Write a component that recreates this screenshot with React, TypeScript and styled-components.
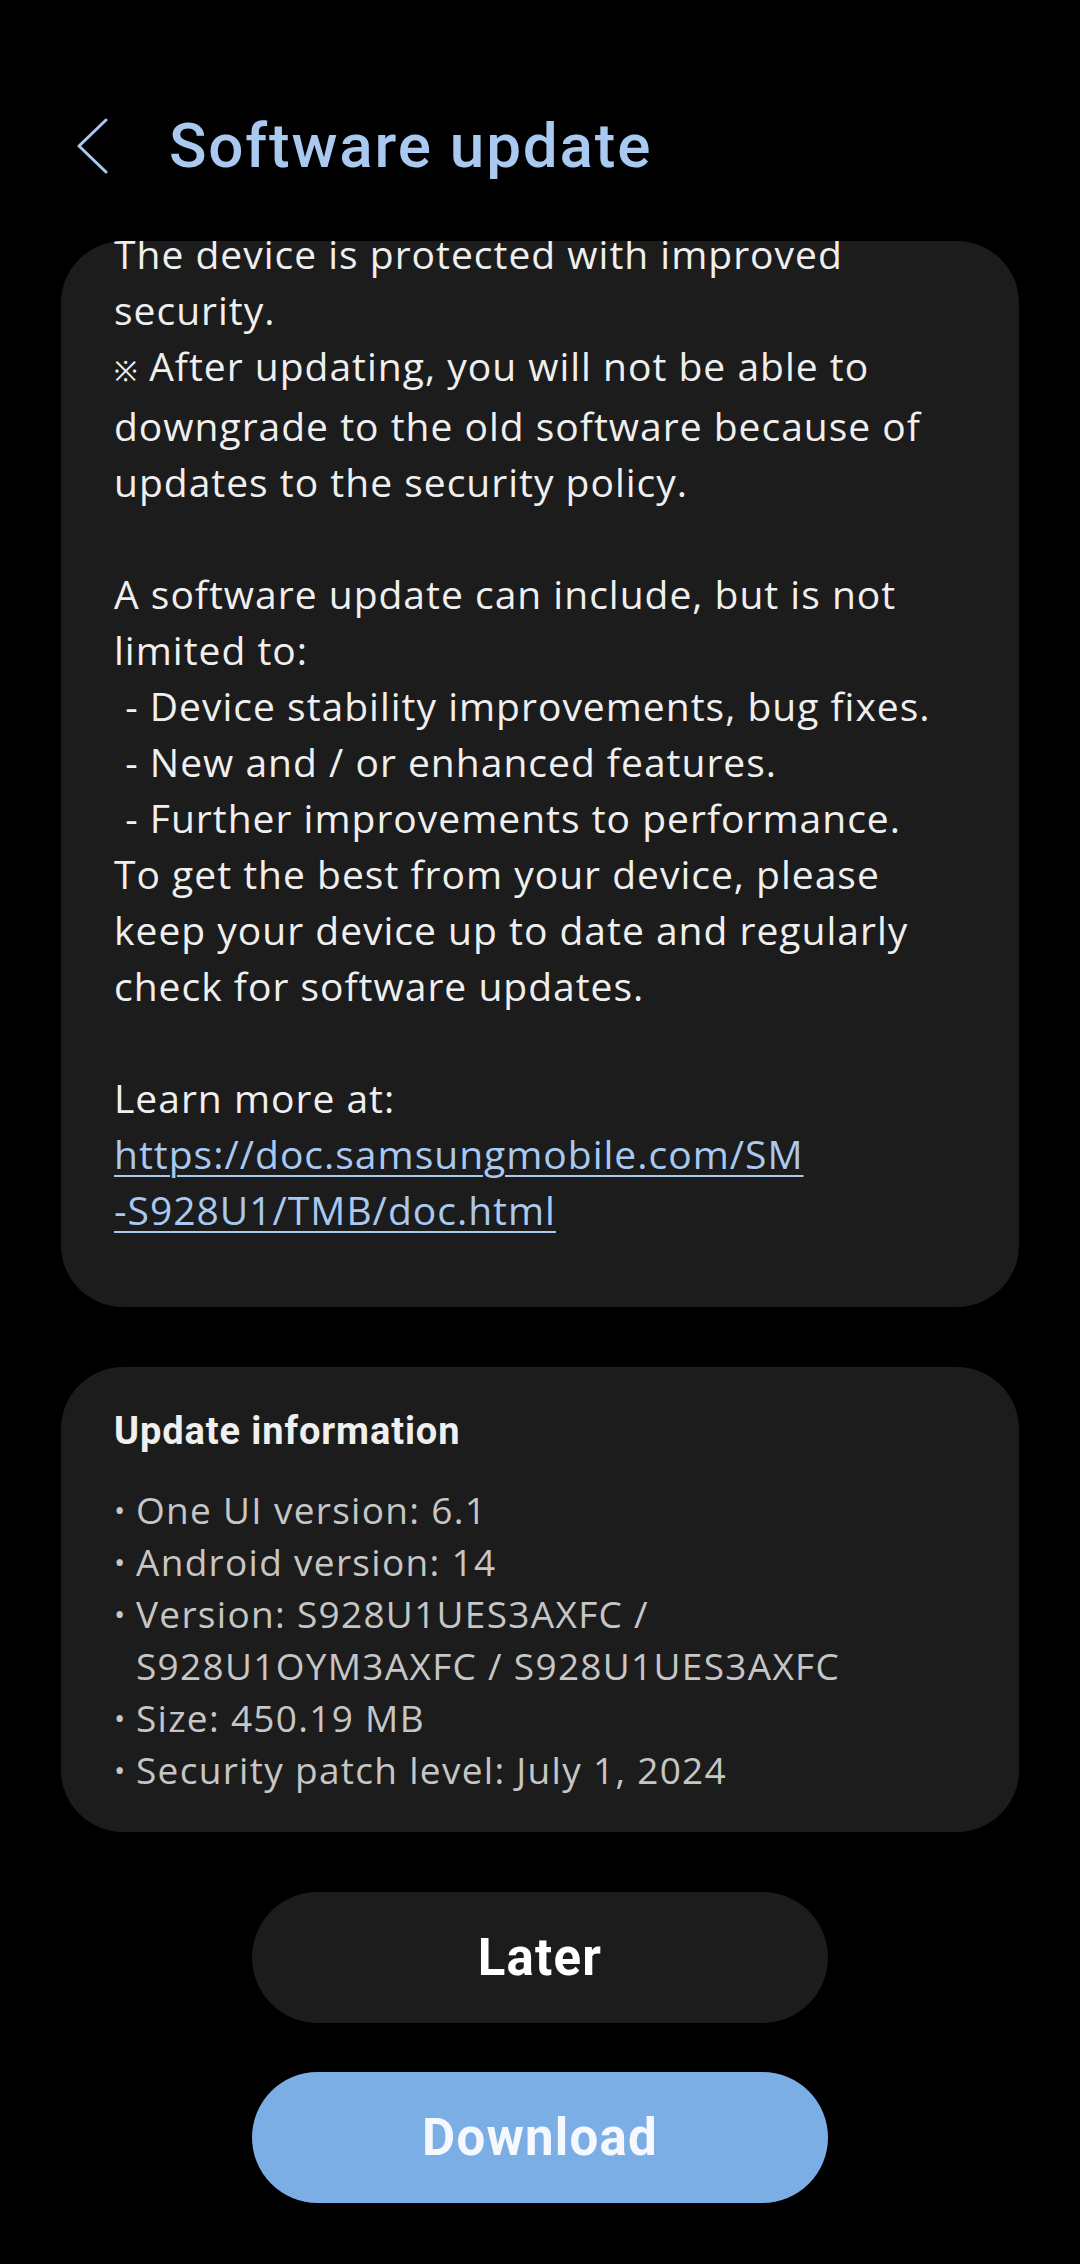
import React from 'react';
import styled, { createGlobalStyle } from 'styled-components';

const GlobalStyle = createGlobalStyle`
    html, body {
        margin: 0;
        padding: 0;
        background: #000000;
    }
    body {
        font-family: Roboto, 'Liberation Sans', sans-serif;
        -webkit-font-smoothing: antialiased;
    }
`;

const Screen = styled.div`
    width: 1080px;
    min-height: 2264px;
    background: #000000;
    display: flex;
    flex-direction: column;
    align-items: center;
`;

const Header = styled.header`
    width: 100%;
    box-sizing: border-box;
    height: 241px;
    padding: 106px 0 0 76px;
    display: flex;
    align-items: flex-start;
`;

const BackButton = styled.button`
    width: 32px;
    height: 80px;
    padding: 0;
    margin-right: 61px;
    border: none;
    background: none;
    display: flex;
    align-items: center;
    justify-content: flex-start;
`;

const Title = styled.h1`
    margin: 0;
    height: 80px;
    line-height: 80px;
    font-size: 62px;
    font-weight: 500;
    color: #a9c9f0;
    letter-spacing: 1.8px;
`;

const Card = styled.section`
    width: 958px;
    box-sizing: border-box;
    background: #1c1c1c;
    border-radius: 62px;
    overflow: hidden;
`;

const NotesCard = styled(Card)`
    height: 1066px;
    padding: 0 20px 0 53px;
`;

const Notes = styled.div`
    margin-top: -15px;
    font-family: 'Open Sans', Roboto, sans-serif;
    font-size: 39px;
    letter-spacing: 1px;
    line-height: 56px;
    color: #efefef;
    white-space: pre;
`;

const Mark = styled.span`
    font-size: 28px;
`;

const Link = styled.a`
    color: #a9c9f0;
    text-decoration: underline;
    text-underline-offset: 6px;
    text-decoration-thickness: 2px;
`;

const InfoCard = styled(Card)`
    margin-top: 60px;
    padding: 40px 20px 36px 53px;
`;

const InfoTitle = styled.h2`
    margin: 0 0 29px;
    font-size: 38px;
    line-height: 48px;
    font-weight: 700;
    color: #efefef;
    letter-spacing: 0.9px;
`;

const InfoList = styled.ul`
    margin: 0;
    padding: 0;
    list-style: none;
`;

const InfoItem = styled.li`
    display: flex;
    font-family: 'Open Sans', Roboto, sans-serif;
    font-size: 37px;
    letter-spacing: 1.3px;
    line-height: 52px;
    color: #c6c6c6;
`;

const Bullet = styled.span`
    width: 22px;
    flex-shrink: 0;
    font-size: 30px;
    letter-spacing: 0;
`;

const ItemText = styled.span`
    white-space: pre;
`;

const Buttons = styled.div`
    margin-top: 60px;
    display: flex;
    flex-direction: column;
    gap: 49px;
`;

const PillButton = styled.button<{ $primary?: boolean }>`
    width: 576px;
    height: 131px;
    border: none;
    border-radius: 66px;
    background: ${({ $primary }) => ($primary ? '#7aaee5' : '#1c1c1c')};
    color: ${({ $primary }) => ($primary ? '#f5f9ff' : '#ffffff')};
    font-family: Roboto, 'Liberation Sans', sans-serif;
    font-size: 51px;
    font-weight: 700;
    letter-spacing: 1.2px;
`;

const infoItems = [
    'One UI version: 6.1',
    'Android version: 14',
    'Version: S928U1UES3AXFC /\nS928U1OYM3AXFC / S928U1UES3AXFC',
    'Size: 450.19 MB',
    'Security patch level: July 1, 2024',
];

function ChevronLeft(): React.ReactElement {
    return (
        <svg width="32" height="56" viewBox="0 0 32 56" fill="none">
            <polyline
                points="30,2 3,28 30,54"
                stroke="#a9c9f0"
                strokeWidth="3"
                strokeLinecap="round"
                strokeLinejoin="round"
            />
        </svg>
    );
}

function App(): React.ReactElement {
    return (
        <Screen>
            <GlobalStyle />
            <Header>
                <BackButton aria-label="Back">
                    <ChevronLeft />
                </BackButton>
                <Title>Software update</Title>
            </Header>

            <NotesCard>
                <Notes>
                    {'The device is protected with improved\nsecurity.\n'}
                    <Mark>※</Mark>
                    {' After updating, you will not be able to\ndowngrade to the old software because of\nupdates to the security policy.\n\n'}
                    {'A software update can include, but is not\nlimited to:\n - Device stability improvements, bug fixes.\n - New and / or enhanced features.\n - Further improvements to performance.\n'}
                    {'To get the best from your device, please\nkeep your device up to date and regularly\ncheck for software updates.\n\n'}
                    {'Learn more at:\n'}
                    <Link href="#">{'https://doc.samsungmobile.com/SM\n-S928U1/TMB/doc.html'}</Link>
                </Notes>
            </NotesCard>

            <InfoCard>
                <InfoTitle>Update information</InfoTitle>
                <InfoList>
                    {infoItems.map((item) => (
                        <InfoItem key={item}>
                            <Bullet>•</Bullet>
                            <ItemText>{item}</ItemText>
                        </InfoItem>
                    ))}
                </InfoList>
            </InfoCard>

            <Buttons>
                <PillButton>Later</PillButton>
                <PillButton $primary>Download</PillButton>
            </Buttons>
        </Screen>
    );
}

export default App;
